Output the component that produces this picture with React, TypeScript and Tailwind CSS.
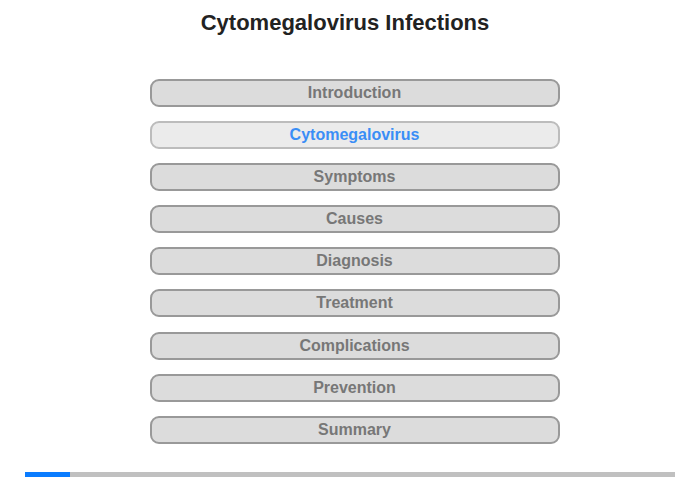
const sections = [
  { name: 'Introduction', active: false },
  { name: 'Cytomegalovirus', active: true },
  { name: 'Symptoms', active: false },
  { name: 'Causes', active: false },
  { name: 'Diagnosis', active: false },
  { name: 'Treatment', active: false },
  { name: 'Complications', active: false },
  { name: 'Prevention', active: false },
  { name: 'Summary', active: false },
];

export default function App() {
  return (
    <div className="w-[700px] h-[480px] bg-white font-['Liberation_Sans',Arial,sans-serif] flex flex-col">
      {/* Title */}
      <h1 className="pt-[10px] pr-[10px] text-center text-[22px] leading-[26px] font-bold text-[#222]">
        Cytomegalovirus Infections
      </h1>

      {/* Menu */}
      <div className="mt-[43px] pl-[9px] flex flex-col items-center gap-[14.1px]">
        {sections.map((s) => (
          <button
            key={s.name}
            className={`w-[410px] h-[28px] rounded-[9px] border-2 text-[16px] font-bold leading-none flex items-center justify-center ${
              s.active
                ? 'bg-[#ebebeb] border-[#bcbcbc] text-[#3a8ef6]'
                : 'bg-[#dcdcdc] border-[#999] text-[#777]'
            }`}
          >
            {s.name}
          </button>
        ))}
      </div>

      {/* Progress */}
      <div className="mt-auto mb-[3px] mx-[25px] h-[5px] bg-[#c0c0c0] flex">
        <div className="w-[45px] h-full bg-[#0a7cff]" />
      </div>
    </div>
  );
}
